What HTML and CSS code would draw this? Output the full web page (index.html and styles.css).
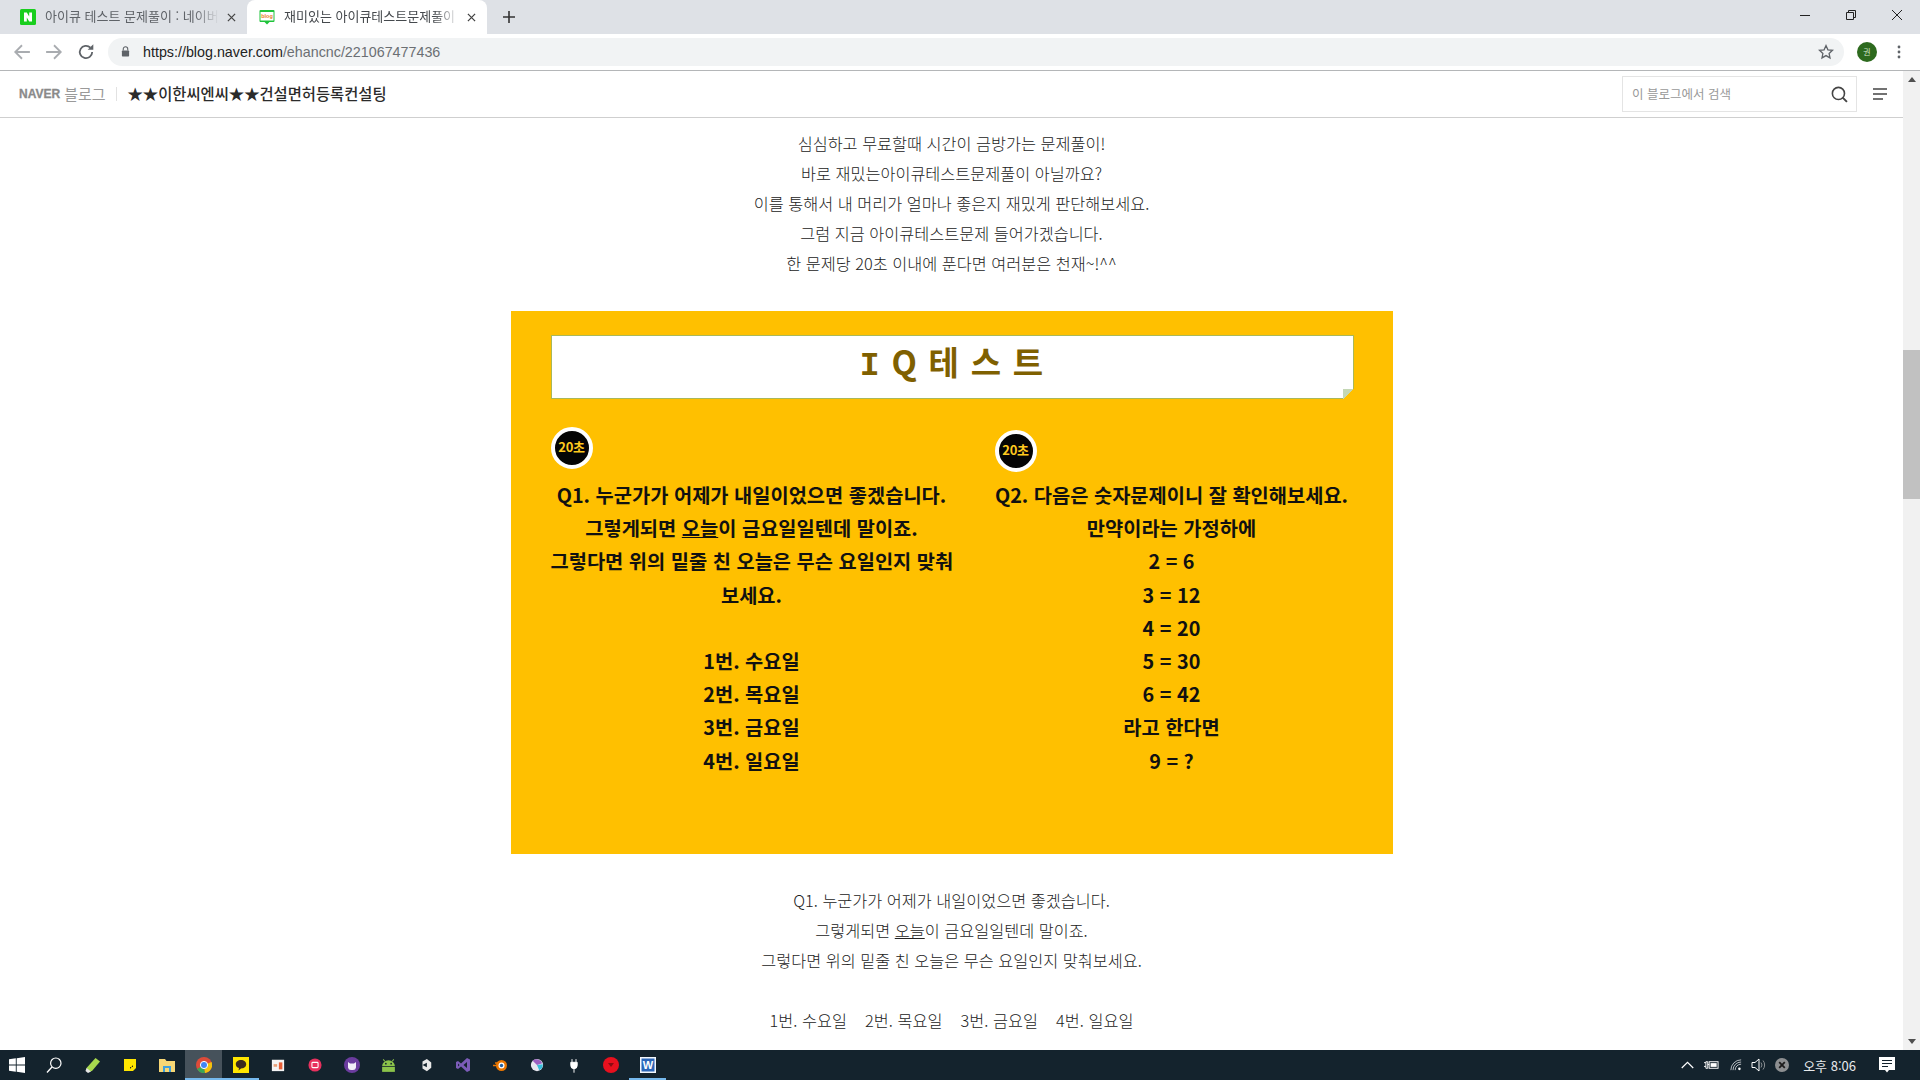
FILE: index.html
```html
<!DOCTYPE html>
<html lang="ko">
<head>
<meta charset="utf-8">
<title>재미있는 아이큐테스트문제풀이</title>
<link rel="stylesheet" href="styles.css">
</head>
<body>
<div class="tabbar">
  <div class="tab tab-idle">
    <svg class="fav" viewBox="0 0 16 16"><rect width="16" height="16" rx="1.5" fill="#19ce1e"/><path d="M4 3.5h2.8l2.4 4v-4H12v9H9.2l-2.4-4v4H4z" fill="#fff"/></svg>
    <span class="tab-title">아이큐 테스트 문제풀이 : 네이버 블로그</span>
    <svg class="tab-x" viewBox="0 0 10 10"><path d="M1 1l8 8M9 1l-8 8" stroke="#444" stroke-width="1.4"/></svg>
  </div>
  <div class="tab tab-active">
    <svg class="fav" viewBox="0 0 16 16"><path d="M1.5 1h13a1 1 0 0 1 1 1v10a1 1 0 0 1-1 1h-4L8 15.5 5.5 13h-4a1 1 0 0 1-1-1V2a1 1 0 0 1 1-1z" fill="#1fc33a"/><rect x="1.500" y="3" width="13" height="8.500" fill="#fff"/><text x="8" y="9.300" text-anchor="middle" class="fav-blog">blog</text></svg>
    <span class="tab-title">재미있는 아이큐테스트문제풀이 모음</span>
    <svg class="tab-x" viewBox="0 0 10 10"><path d="M1 1l8 8M9 1l-8 8" stroke="#444" stroke-width="1.4"/></svg>
  </div>
  <svg class="new-tab" viewBox="0 0 12 12"><path d="M6 0v12M0 6h12" stroke="#333" stroke-width="1.6"/></svg>
  <div class="win-controls">
    <svg viewBox="0 0 12 12"><path d="M1 6.5h10" stroke="#222" stroke-width="1"/></svg>
    <svg viewBox="0 0 12 12"><path d="M3.5 3V1.5h7v7H9M1.5 3.5h7v7h-7z" fill="none" stroke="#222" stroke-width="1"/></svg>
    <svg viewBox="0 0 12 12"><path d="M1 1l10 10M11 1L1 11" stroke="#222" stroke-width="1"/></svg>
  </div>
</div>
<div class="toolbar">
  <svg class="nav" viewBox="0 0 16 16"><path d="M15 8H2M8 2L2 8l6 6" fill="none" stroke="#a9acb0" stroke-width="1.6"/></svg>
  <svg class="nav" viewBox="0 0 16 16"><path d="M1 8h13M8 2l6 6-6 6" fill="none" stroke="#a9acb0" stroke-width="1.6"/></svg>
  <svg class="nav" viewBox="0 0 16 16"><path d="M13.500 8a5.500 5.500 0 1 1-1.600-3.900" fill="none" stroke="#5f6368" stroke-width="1.6"/><path d="M14.500 1v5H9.500z" fill="#5f6368"/></svg>
  <div class="omnibox">
    <svg class="lock" viewBox="0 0 10 12"><path d="M2.5 5V3.3a2.5 2.5 0 0 1 5 0V5" fill="none" stroke="#5f6368" stroke-width="1.2"/><rect x="1" y="5" width="8" height="6.5" rx=".8" fill="#5f6368"/></svg>
    <span class="url"><span class="url-host">https://blog.naver.com</span>/ehancnc/221067477436</span>
    <svg class="star" viewBox="0 0 16 16"><path d="M8 1.6l1.9 4.2 4.6.5-3.4 3.1.9 4.5L8 11.6l-4 2.3.9-4.5L1.500 6.300l4.600-.5z" fill="none" stroke="#5f6368" stroke-width="1.300"/></svg>
  </div>
  <div class="avatar">권</div>
  <svg class="dots" viewBox="0 0 4 14"><circle cx="2" cy="2" r="1.400" fill="#5f6368"/><circle cx="2" cy="7" r="1.400" fill="#5f6368"/><circle cx="2" cy="12" r="1.400" fill="#5f6368"/></svg>
</div>
<div class="viewport">
  <div class="page">
    <header class="blog-head">
      <span class="naver">NAVER</span>
      <span class="blog-word">블로그</span>
      <span class="blog-div"></span>
      <span class="blog-name">★★이한씨엔씨★★건설면허등록컨설팅</span>
      <div class="search">
        <span class="search-ph">이 블로그에서 검색</span>
        <svg class="search-ic" viewBox="0 0 16 16"><circle cx="7" cy="7" r="5.700" fill="none" stroke="#444" stroke-width="1.500"/><path d="M11 11l4 4" stroke="#444" stroke-width="1.800"/></svg>
      </div>
      <svg class="burger" viewBox="0 0 14 12"><path d="M0 1h14M0 6h14M0 11h10" stroke="#444" stroke-width="1.700"/></svg>
    </header>
    <main class="content">
      <div class="para">
        <p>심심하고 무료할때 시간이 금방가는 문제풀이!</p>
        <p>바로 재밌는아이큐테스트문제풀이 아닐까요?</p>
        <p>이를 통해서 내 머리가 얼마나 좋은지 재밌게 판단해보세요.</p>
        <p>그럼 지금 아이큐테스트문제 들어가겠습니다.</p>
        <p>한 문제당 20초 이내에 푼다면 여러분은 천재~!^^</p>
      </div>
      <section class="quiz">
        <div class="quiz-title"><span class="serif-i">I</span> Q 테 스 트</div>
        <div class="quiz-cols">
          <div class="q-col q-left">
            <div class="badge">20초</div>
            <p>Q1. 누군가가 어제가 내일이었으면 좋겠습니다.</p>
            <p>그렇게되면 <u>오늘</u>이 금요일일텐데 말이죠.</p>
            <p>그렇다면 위의 밑줄 친 오늘은 무슨 요일인지 맞춰</p>
            <p>보세요.</p>
            <p>&nbsp;</p>
            <p>1번. 수요일</p>
            <p>2번. 목요일</p>
            <p>3번. 금요일</p>
            <p>4번. 일요일</p>
          </div>
          <div class="q-col q-right">
            <div class="badge">20초</div>
            <p>Q2. 다음은 숫자문제이니 잘 확인해보세요.</p>
            <p>만약이라는 가정하에</p>
            <p>2 = 6</p>
            <p>3 = 12</p>
            <p>4 = 20</p>
            <p>5 = 30</p>
            <p>6 = 42</p>
            <p>라고 한다면</p>
            <p>9 = ?</p>
          </div>
        </div>
      </section>
      <div class="para para-low">
        <p>Q1. 누군가가 어제가 내일이었으면 좋겠습니다.</p>
        <p>그렇게되면 <u>오늘</u>이 금요일일텐데 말이죠.</p>
        <p>그렇다면 위의 밑줄 친 오늘은 무슨 요일인지 맞춰보세요.</p>
        <p>&nbsp;</p>
        <p>1번. 수요일 &nbsp;&nbsp; 2번. 목요일 &nbsp;&nbsp; 3번. 금요일 &nbsp;&nbsp; 4번. 일요일</p>
      </div>
    </main>
  </div>
  <div class="scrollbar">
    <svg class="sb-arrow" viewBox="0 0 8 5"><path d="M4 0l4 5H0z" fill="#505050"/></svg>
    <div class="sb-track"><div class="sb-thumb"></div></div>
    <svg class="sb-arrow" viewBox="0 0 8 5"><path d="M4 5l4-5H0z" fill="#505050"/></svg>
  </div>
</div>
<footer class="taskbar">
  <div class="tb-cell tb-nudge"><svg viewBox="0 0 16 16" class="tb-ic"><path d="M0 2.300l6.800-1v6.300H0zM7.700 1.200L16 0v7.600H7.700zM0 8.400h6.800v6.300l-6.800-1zM7.700 8.400H16V16l-8.300-1.200z" fill="#fff"/></svg></div>
  <div class="tb-cell tb-nudge"><svg viewBox="0 0 16 16" class="tb-ic"><circle cx="9.800" cy="6.200" r="5.200" fill="none" stroke="#fff" stroke-width="1.200"/><path d="M6 10L1 15.500" stroke="#fff" stroke-width="1.300"/></svg></div>
  <div class="tb-cell"><svg viewBox="0 0 16 16" class="tb-ic"><path d="M1.500 11L10.500 1l4.500 3.500-8 9.500-4.500 1z" fill="#a7d94e"/><path d="M1.500 11l4.500 3.500-3 1.500-2.500-2z" fill="#e6e6e6"/></svg></div>
  <div class="tb-cell"><svg viewBox="0 0 14 14" class="tb-ic tb-sm"><path d="M1 1h12v9l-3 3H1z" fill="#ffe600"/><path d="M7 9h3v-2l-3 4z" fill="#222"/></svg></div>
  <div class="tb-cell"><svg viewBox="0 0 16 16" class="tb-ic"><path d="M0 2h6l1.500 2H16v11H0z" fill="#f7d774"/><rect x="4" y="9" width="8" height="6" fill="#3ea0dc"/><rect x="6" y="11" width="4" height="4" fill="#f7d774"/></svg></div>
  <div class="tb-cell tb-active"><svg viewBox="0 0 16 16" class="tb-ic"><circle cx="8" cy="8" r="8" fill="#dd4b39"/><path d="M8 8L1 12a8 8 0 0 0 8 4z" fill="#3aa757"/><path d="M8 8l7.500-3A8 8 0 0 1 9 16z" fill="#f4c20d"/><circle cx="8" cy="8" r="3.600" fill="#4285f4" stroke="#fff" stroke-width="1"/></svg></div>
  <div class="tb-cell tb-open"><svg viewBox="0 0 16 16" class="tb-ic"><rect width="16" height="16" fill="#ffe600"/><path d="M8 3c3 0 5.200 1.800 5.200 4.200S11 11.400 8 11.400l-2.500 2 .5-2.300C4 10.500 2.800 9 2.800 7.200 2.800 4.800 5 3 8 3z" fill="#3b2a1d"/></svg></div>
  <div class="tb-cell"><svg viewBox="0 0 16 16" class="tb-ic tb-sm"><rect x="1" y="2" width="14" height="13" fill="#f4f4f4"/><rect x="9" y="5" width="4" height="8" fill="#e85f37"/><rect x="3" y="7" width="4" height="3" fill="#e8a078"/></svg></div>
  <div class="tb-cell"><svg viewBox="0 0 16 16" class="tb-ic tb-sm"><circle cx="8" cy="8" r="7.500" fill="#e8315e"/><rect x="4.500" y="5" width="7" height="6" rx="1" fill="none" stroke="#fff" stroke-width="1.200"/></svg></div>
  <div class="tb-cell"><svg viewBox="0 0 16 16" class="tb-ic"><circle cx="8" cy="8" r="8" fill="#6b3c9e"/><path d="M4 5l2 1.500h4L12 5v5.500A3 3 0 0 1 9 13H7a3 3 0 0 1-3-2.500z" fill="#f2eef8"/></svg></div>
  <div class="tb-cell"><svg viewBox="0 0 16 12" class="tb-android"><path d="M2 6.500a6 5.500 0 0 1 12 0z" fill="#8bc34a"/><rect x="2" y="7.200" width="12" height="4.800" fill="#8bc34a"/><path d="M4.500 2L3 .3M11.500 2L13 .3" stroke="#8bc34a"/><circle cx="5.500" cy="4.300" r=".8" fill="#14232d"/><circle cx="10.500" cy="4.300" r=".8" fill="#14232d"/></svg></div>
  <div class="tb-cell"><svg viewBox="0 0 16 16" class="tb-ic tb-sm"><path d="M9 1l5 4v6l-5 4-5-3V4z" fill="#e8e8e8"/><path d="M4 8l5-2.500v5z" fill="#14232d"/></svg></div>
  <div class="tb-cell"><svg viewBox="0 0 16 16" class="tb-ic"><path d="M12 1l3 1.500v11L12 15 6 9.500 3 12l-2-1V5l2-1 3 2.500z" fill="#7c5cb8"/><path d="M12 5v6L8.500 8zM3 6.500v3L4.500 8z" fill="#14232d"/></svg></div>
  <div class="tb-cell"><svg viewBox="0 0 16 16" class="tb-ic"><circle cx="9.500" cy="8.500" r="5.500" fill="#ea7600"/><circle cx="9.500" cy="8.500" r="3" fill="#fff"/><circle cx="9.500" cy="8.500" r="1.700" fill="#24609f"/><path d="M1 8.500h5M3 6h4" stroke="#ea7600" stroke-width="1.300"/></svg></div>
  <div class="tb-cell"><svg viewBox="0 0 16 16" class="tb-ic tb-sm"><circle cx="8" cy="8" r="7" fill="#e6e6ef"/><path d="M3 3a7 7 0 0 1 11 3L8 8z" fill="#9a5fc0"/><path d="M14.500 7a7 7 0 0 1-4 7L8 8z" fill="#38bcd9"/></svg></div>
  <div class="tb-cell"><svg viewBox="0 0 10 18" class="tb-plug"><path d="M2.500 1v4M7.500 1v4M1 5h8v4a4 4 0 0 1-8 0zM5 12v6" fill="#fff" stroke="#fff" stroke-width="1.200"/></svg></div>
  <div class="tb-cell"><svg viewBox="0 0 16 16" class="tb-ic"><circle cx="8" cy="8" r="8" fill="#e8101e"/><path d="M5 6h6l-3 4z" fill="#8c0a12"/></svg></div>
  <div class="tb-cell tb-open tb-word"><svg viewBox="0 0 16 16" class="tb-ic"><rect width="16" height="16" fill="#f3f7fc"/><rect x="1.500" y="1.500" width="13" height="13" fill="#2b66b8"/><text x="8" y="12" text-anchor="middle" class="word-w">W</text></svg></div>
  <div class="tray">
    <svg class="tray-chev" viewBox="0 0 12 7"><path d="M.7 6.300L6 1l5.300 5.300" fill="none" stroke="#fff" stroke-width="1.100"/></svg>
    <svg class="tray-bat" viewBox="0 0 16 10"><path d="M0 2.500h2M0 6.500h2M2 1.500h2v7H2zM4 4.500h1.500" stroke="#fff" fill="none"/><rect x="5.500" y="1.500" width="9.500" height="7" fill="none" stroke="#fff"/><rect x="7" y="3" width="6.500" height="4" fill="#fff"/></svg>
    <svg class="tray-wifi" viewBox="0 0 14 14"><path d="M1 13A12 12 0 0 1 13 1M3.500 13A9.500 9.500 0 0 1 13 3.500M6 13a7 7 0 0 1 7-7" fill="none" stroke="#cfd3d6" stroke-width="1"/><circle cx="11" cy="11.500" r="1.500" fill="#fff"/></svg>
    <svg class="tray-vol" viewBox="0 0 16 14"><path d="M1 4.500h3L8 1v12L4 9.500H1z" fill="none" stroke="#fff"/><path d="M10 4.500a4 4 0 0 1 0 5M12 2.500a7 7 0 0 1 0 9" fill="none" stroke="#8a8f93"/></svg>
    <svg class="tray-x" viewBox="0 0 14 14"><circle cx="7" cy="7" r="7" fill="#8d8f91"/><path d="M4.200 4.200l5.600 5.600M9.800 4.200L4.200 9.800" stroke="#1c1c1c" stroke-width="1.800"/></svg>
    <span class="clock">오후 8:06</span>
    <svg class="tray-note" viewBox="0 0 16 16"><path d="M0 0h16v13h-6l-2 2.500L6 13H0z" fill="#fff"/><path d="M3 3.500h10M3 6.500h10M3 9.500h6" stroke="#14232d" stroke-width="1"/></svg>
  </div>
</footer>
</body>
</html>
```
FILE: styles.css
```css
* { box-sizing: border-box; }
html, body { margin: 0; padding: 0; height: 100%; }
body {
  display: flex;
  flex-direction: column;
  height: 1080px;
  overflow: hidden;
  background: #fff;
  font-family: "Noto Sans CJK KR", "Noto Sans", sans-serif;
  color: #333;
}
p { margin: 0; }

.tabbar {
  flex: 0 0 34px;
  display: flex;
  align-items: flex-end;
  background: #dee1e6;
}
.tab {
  height: 34px;
  display: flex;
  align-items: center;
  font-size: 13px;
  color: #5f6368;
  overflow: hidden;
}
.tab-idle { width: 247px; padding: 0 11px 0 20px; }
.tab-active {
  width: 240px;
  padding: 0 11px 0 12px;
  background: #fff;
  border-radius: 8px 8px 0 0;
  color: #45494d;
}
.fav { width: 16px; height: 16px; flex: none; margin-right: 9px; }
.fav-blog { font-family: "Liberation Sans", sans-serif; font-weight: 700; font-size: 5.500px; fill: #e8801f; }
.tab-title {
  flex: 1;
  overflow: hidden;
  white-space: nowrap;
  padding-bottom: 3px;
  -webkit-mask-image: linear-gradient(to right, #000 86%, transparent 100%);
  mask-image: linear-gradient(to right, #000 86%, transparent 100%);
}
.tab-x { width: 9px; height: 9px; flex: none; margin-left: 8px; }
.new-tab { width: 12px; height: 12px; margin: 0 0 11px 16px; }
.win-controls {
  margin-left: auto;
  align-self: flex-start;
  display: flex;
}
.win-controls svg { width: 46px; height: 12px; margin-top: 9px; padding: 0 17px; }

.toolbar {
  flex: 0 0 37px;
  display: flex;
  align-items: center;
  background: #fff;
  border-bottom: 1px solid #b4b6b8;
  padding: 0 0 0 13px;
}
.nav { width: 18px; height: 18px; margin-right: 14px; flex: none; }
.omnibox {
  width: 1736px;
  height: 28px;
  margin-left: -1px;
  margin-top: -1px;
  border-radius: 14px;
  background: #f1f3f4;
  display: flex;
  align-items: center;
  padding: 0 10px 0 13px;
}
.lock { width: 9px; height: 11px; margin-right: 13px; }
.url {
  font-family: "Liberation Sans", sans-serif;
  font-size: 14.300px;
  color: #6b6f73;
  flex: 1;
}
.url-host { color: #222; }
.star { width: 16px; height: 16px; }
.avatar {
  width: 20px;
  height: 20px;
  margin-left: 13px;
  margin-top: -1px;
  border-radius: 50%;
  background: #2d6a1e;
  color: #cfe3c6;
  font-size: 8px;
  display: flex;
  align-items: center;
  justify-content: center;
}
.dots { width: 4px; height: 14px; margin-left: 20px; }

.viewport { flex: 1; display: flex; min-height: 0; }
.page { flex: 1; min-width: 0; display: flex; flex-direction: column; overflow: hidden; }

.blog-head {
  flex: 0 0 47px;
  display: flex;
  align-items: center;
  padding-left: 19px;
  border-bottom: 1px solid #cfcfcf;
}
.naver {
  font-family: "Liberation Sans", sans-serif;
  font-weight: 700;
  font-size: 12px;
  color: #8a8a8a;
  -webkit-text-stroke: .3px #8a8a8a;
}
.blog-word { font-size: 15px; color: #9a9a9a; margin-left: 4px; padding-bottom: 2px; }
.blog-div { width: 1px; height: 14px; background: #e2e2e2; margin: 0 11px 0 10px; }
.blog-name { font-size: 15.350px; font-weight: 500; color: #2b2b2b; padding-bottom: 2px; }
.search {
  margin-left: auto;
  width: 235px;
  height: 36px;
  border: 1px solid #e4e4e4;
  display: flex;
  align-items: center;
  padding: 0 8px 0 9px;
}
.search-ph { flex: 1; font-size: 12.500px; color: #999; padding-bottom: 2px; }
.search-ic { width: 17px; height: 17px; }
.burger { width: 14px; height: 12px; margin: 0 16px 0 16px; }

.content { flex: 1; overflow: hidden; padding-top: 10px; }
.para { text-align: center; font-size: 16.300px; line-height: 30px; color: #222; font-weight: 300; }
.para-low { margin-top: 31px; }

.quiz {
  width: 882px;
  height: 543px;
  margin: 33px auto 0;
  background: #ffc000;
  padding: 24px 39px 0 40px;
}
.quiz-title {
  position: relative;
  height: 64px;
  background: #fff;
  border: 1px solid #a9b85a;
  text-align: center;
  font-size: 33px;
  font-weight: 700;
  color: #7f6000;
  line-height: 51px;
  letter-spacing: 1px;
  word-spacing: .5px;
}
.quiz-title::after {
  content: "";
  position: absolute;
  right: -1px;
  bottom: -1px;
  width: 11px;
  height: 10px;
  background: linear-gradient(315deg, #ffc000 48%, #c4d7b4 50%);
}
.serif-i { font-family: "Liberation Mono", monospace; }
.quiz-cols {
  display: grid;
  grid-template-columns: 402px 366px;
  column-gap: 36px;
}
.q-col {
  text-align: center;
  font-size: 19.800px;
  font-weight: 700;
  line-height: 33.200px;
  color: #111;
  white-space: nowrap;
}
.q-left { padding-top: 28px; }
.q-right { padding-top: 31px; }
.badge {
  width: 42px;
  height: 42px;
  border-radius: 50%;
  background: #050505;
  border: 4px solid #fff;
  color: #ffc91f;
  font-size: 13px;
  font-weight: 700;
  line-height: 32px;
  text-align: center;
  letter-spacing: -.3px;
}
.q-left .badge { margin-bottom: 9px; }
.q-right .badge { margin: 0 0 6px 6px; }

.scrollbar {
  flex: 0 0 17px;
  display: flex;
  flex-direction: column;
  align-items: center;
  background: #f1f1f1;
}
.sb-arrow { width: 8px; height: 5px; flex: none; margin: 6px 0; }
.sb-track { flex: 1; width: 100%; padding-top: 262px; }
.sb-thumb { height: 149px; background: #c1c1c1; }

.taskbar {
  flex: 0 0 30px;
  display: flex;
  background: #14232d;
}
.tb-cell {
  width: 37px;
  height: 30px;
  flex: none;
  display: flex;
  align-items: center;
  justify-content: center;
}
.tb-nudge { padding-right: 3px; }
.tb-active { background: #46525b; box-shadow: inset 0 -2px 0 #76b9ed; }
.tb-open { box-shadow: inset 0 -2px 0 #76b9ed; }
.tb-ic { width: 16px; height: 16px; }
.tb-sm { width: 14px; height: 14px; }
.tb-android { width: 17px; height: 13px; }
.tb-plug { width: 8px; height: 15px; }
.word-w { font-family: "Liberation Sans", sans-serif; font-weight: 700; font-size: 11px; fill: #fff; }

.tray {
  margin-left: auto;
  display: flex;
  align-items: center;
  color: #fff;
}
.tray-chev { width: 13px; height: 8px; margin-right: 10px; }
.tray-bat { width: 15px; height: 10px; margin-right: 11px; }
.tray-wifi { width: 12px; height: 12px; margin-right: 9px; }
.tray-vol { width: 16px; height: 14px; margin-right: 8px; }
.tray-x { width: 14px; height: 14px; margin-right: 14px; }
.clock { font-size: 13px; white-space: nowrap; color: #e8eaec; margin-right: 23px; }
.tray-note { width: 16px; height: 16px; margin-right: 25px; }
```
